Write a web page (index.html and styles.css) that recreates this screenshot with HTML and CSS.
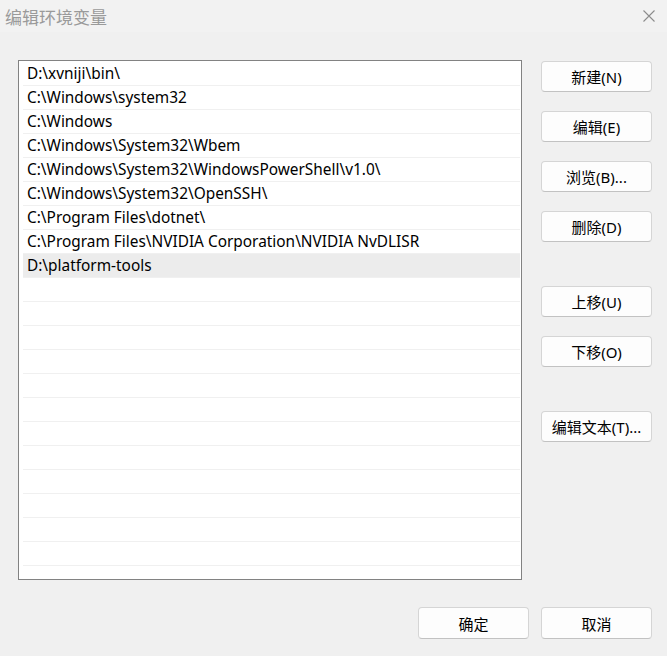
FILE: index.html
```html
<!DOCTYPE html>
<html lang="zh-CN">
<head>
    <meta charset="UTF-8">
    <title>编辑环境变量</title>
    <link rel="stylesheet" href="styles.css">
</head>
<body>
    <div class="titlebar">
        <span class="title">编辑环境变量</span>
        <svg class="close" width="12" height="12" viewBox="0 0 12 12">
            <path d="M0.5 0.5 L11.5 11.5 M11.5 0.5 L0.5 11.5" stroke="#8c8c8c" stroke-width="1.1" fill="none"/>
        </svg>
    </div>

    <div class="main">
        <div class="list">
            <div class="row">D:\xvniji\bin\</div>
            <div class="row">C:\Windows\system32</div>
            <div class="row">C:\Windows</div>
            <div class="row">C:\Windows\System32\Wbem</div>
            <div class="row">C:\Windows\System32\WindowsPowerShell\v1.0\</div>
            <div class="row">C:\Windows\System32\OpenSSH\</div>
            <div class="row">C:\Program Files\dotnet\</div>
            <div class="row">C:\Program Files\NVIDIA Corporation\NVIDIA NvDLISR</div>
            <div class="row selected">D:\platform-tools</div>
            <div class="row"></div>
            <div class="row"></div>
            <div class="row"></div>
            <div class="row"></div>
            <div class="row"></div>
            <div class="row"></div>
            <div class="row"></div>
            <div class="row"></div>
            <div class="row"></div>
            <div class="row"></div>
            <div class="row"></div>
            <div class="row"></div>
        </div>

        <div class="side">
            <button class="btn">新建(N)</button>
            <button class="btn">编辑(E)</button>
            <button class="btn">浏览(B)...</button>
            <button class="btn">删除(D)</button>
            <button class="btn group">上移(U)</button>
            <button class="btn">下移(O)</button>
            <button class="btn group">编辑文本(T)...</button>
        </div>
    </div>

    <div class="footer">
        <button class="btn">确定</button>
        <button class="btn">取消</button>
    </div>
</body>
</html>
```

FILE: styles.css
```css
body {
    margin: 0;
    background: #f0f0f0;
    font-family: "Noto Sans", "Noto Sans CJK SC", sans-serif;
    font-size: 15.4px;
    color: #000;
    width: 667px;
    height: 656px;
    overflow: hidden;
}
.titlebar {
    height: 32px;
    display: flex;
    align-items: center;
    justify-content: space-between;
    padding: 0 12px 0 5px;
    background: #f2f2f2;
}
.title {
    font-size: 17px;
    color: #9a9a9a;
}
.close {
    display: block;
}
.main {
    display: flex;
    padding: 28px 0 0 18px;
}
.list {
    box-sizing: border-box;
    width: 504px;
    height: 520px;
    border: 1px solid #828282;
    background: #fff;
    padding: 1px 1px 0 4px;
    overflow: hidden;
}
.row {
    height: 23px;
    line-height: 23px;
    border-bottom: 1px solid #f0f0f0;
    padding-left: 4px;
    white-space: nowrap;
}
.row.selected {
    background: #ececec;
}
.side {
    display: flex;
    flex-direction: column;
    margin-left: 19px;
    padding-top: 1px;
}
.btn {
    width: 111px;
    height: 31px;
    margin-bottom: 19px;
    background: #fdfdfd;
    border: 1px solid #d5d5d5;
    border-bottom-color: #c2c2c2;
    border-radius: 4px;
    font-family: inherit;
    font-size: 15px;
    color: #000;
    padding: 0;
}
.btn.group {
    margin-top: 25px;
}
.footer {
    display: flex;
    justify-content: flex-end;
    gap: 12px;
    padding: 27px 15px 0 0;
}
.footer .btn {
    height: 32px;
    margin: 0;
}
```
